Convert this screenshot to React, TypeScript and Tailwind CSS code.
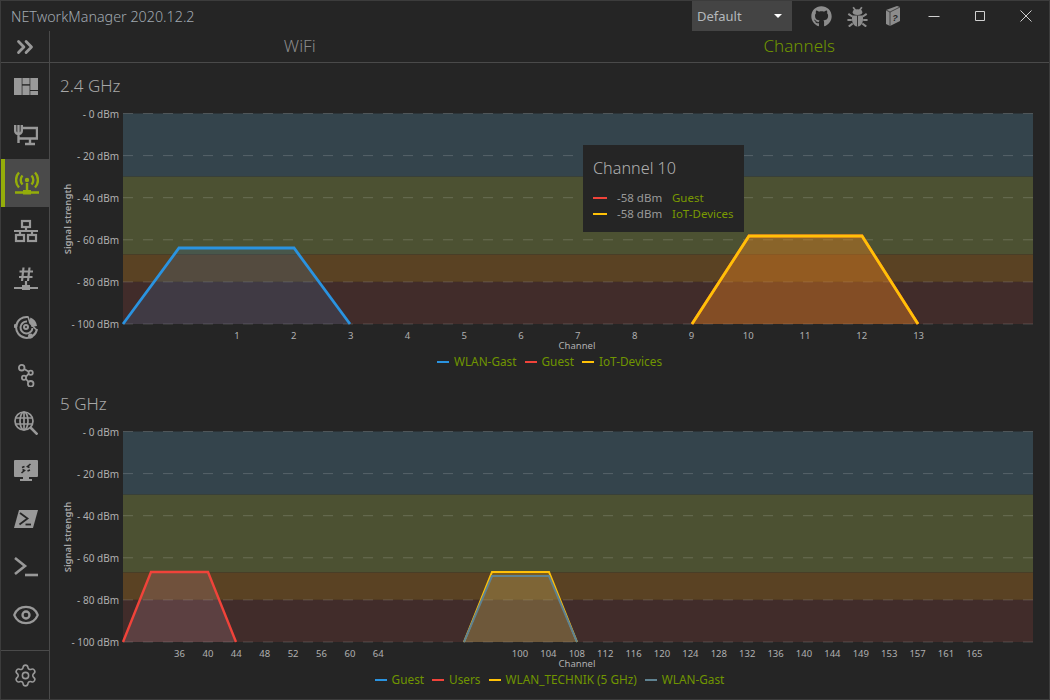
import React from 'react';
import { ChevronsRight, Settings, Eye } from 'lucide-react';
import { FaGithub } from 'react-icons/fa';

type Series = { name: string; color: string; fill: string; opacity: number; points: number[][] };
type Plot = { ticks: { label: string; x: number }[]; lineWidth: number; series: Series[]; legend: { name: string; color: string }[] };

const BLUE = '#2a93e0';
const RED = '#f0433a';
const YELLOW = '#ffc107';
const STEEL = '#5f8291';

const channels24 = ['1', '2', '3', '4', '5', '6', '7', '8', '9', '10', '11', '12', '13'].map((label, i) => ({ label, x: 187 + i * 56.8 }));
const low5 = ['36', '40', '44', '48', '52', '56', '60', '64'].map((label, i) => ({ label, x: 129.5 + i * 28.4 }));
const high5 = ['100', '104', '108', '112', '116', '120', '124', '128', '132', '136', '140', '144', '149', '153', '157', '161', '165'].map((label, i) => ({ label, x: 470 + i * 28.4 }));

const plot24: Plot = {
  ticks: channels24,
  lineWidth: 2.8,
  series: [
    { name: 'WLAN-Gast', color: BLUE, fill: '#3c73af', opacity: 0.2, points: [[73, 224], [129, 148], [244, 148], [300, 224]] },
    { name: 'Guest', color: RED, fill: '#f0433a', opacity: 0.2, points: [[642, 224], [699, 136], [812, 136], [868, 224]] },
    { name: 'IoT-Devices', color: YELLOW, fill: '#ffc107', opacity: 0.2, points: [[642, 224], [699, 136], [812, 136], [868, 224]] },
  ],
  legend: [
    { name: 'WLAN-Gast', color: BLUE },
    { name: 'Guest', color: RED },
    { name: 'IoT-Devices', color: YELLOW },
  ],
};

const plot5: Plot = {
  ticks: [...low5, ...high5],
  lineWidth: 2.4,
  series: [
    { name: 'Users', color: RED, fill: '#c8919f', opacity: 0.2, points: [[73, 224], [101, 154], [158, 154], [186, 224]] },
    { name: 'WLAN_TECHNIK (5 GHz)', color: YELLOW, fill: '#ffc107', opacity: 0.2, points: [[414, 224], [442, 154], [499, 154], [527, 224]] },
    { name: 'WLAN-Gast', color: STEEL, fill: '#8a8f9c', opacity: 0.2, points: [[414, 224], [442, 158], [499, 158], [527, 224]] },
  ],
  legend: [
    { name: 'Guest', color: BLUE },
    { name: 'Users', color: RED },
    { name: 'WLAN_TECHNIK (5 GHz)', color: YELLOW },
    { name: 'WLAN-Gast', color: STEEL },
  ],
};

const Chart = ({ plot }: { plot: Plot }) => {
  const yOf = (dbm: number) => 13.5 + dbm * 2.105;
  return (
    <svg width={999} height={252} className="block" fontFamily="'Noto Sans', sans-serif">
      <rect x={73} y={yOf(0)} width={910} height={yOf(30) - yOf(0)} fill="#34444c" />
      <rect x={73} y={yOf(30)} width={910} height={yOf(67) - yOf(30)} fill="#4c5132" />
      <rect x={73} y={yOf(67)} width={910} height={yOf(80) - yOf(67)} fill="#5a4223" />
      <rect x={73} y={yOf(80)} width={910} height={yOf(100) - yOf(80)} fill="#412c2a" />
      {[0, 20, 40, 60, 80, 100].map((d) => (
        <g key={d}>
          <line x1={73} x2={983} y1={yOf(d)} y2={yOf(d)} stroke="#ffffff" strokeOpacity={0.17} strokeDasharray="10 10" />
          <text x={69} y={yOf(d) + 4} textAnchor="end" fontSize={10} fill="#b0b0b0">- {d} dBm</text>
        </g>
      ))}
      {plot.series.map((s) => (
        <g key={s.name}>
          <polygon points={s.points.map((p) => p.join(',')).join(' ')} fill={s.fill} fillOpacity={s.opacity} />
          <polyline points={s.points.map((p) => p.join(',')).join(' ')} fill="none" stroke={s.color} strokeWidth={s.color === STEEL || plot === plot5 && s.color === YELLOW ? 2 : plot.lineWidth} />
        </g>
      ))}
      {plot.ticks.map((t) => (
        <text key={t.label} x={t.x} y={239} textAnchor="middle" fontSize={9.5} fill="#b0b0b0">{t.label}</text>
      ))}
      <text x={527} y={249} textAnchor="middle" fontSize={9.5} fill="#b0b0b0">Channel</text>
      <text transform="translate(21 119) rotate(-90)" textAnchor="middle" fontSize={9.5} fontWeight={600} fill="#a8a8a8">Signal strength</text>
    </svg>
  );
};

const Section = ({ title, plot, children }: { title: string; plot: Plot; children?: React.ReactNode }) => (
  <section className="relative h-[318px] flex flex-col">
    <h2 className="h-[37px] pl-[10px] pt-[10px] text-[17px] leading-[26px] font-light text-[#a8a8a8]">{title}</h2>
    <Chart plot={plot} />
    <div className="h-[20px] flex items-center justify-center gap-[8px] text-[11.8px] text-[#709500]">
      {plot.legend.map((l) => (
        <div key={l.name} className="flex items-center gap-[5px]">
          <span className="w-[12px] h-[2px]" style={{ backgroundColor: l.color }} />
          <span>{l.name}</span>
        </div>
      ))}
    </div>
    {children}
  </section>
);

const Tooltip = () => (
  <div className="absolute left-[533px] top-[82px] w-[161px] h-[87px] bg-[#252525] px-[10px] pt-[10px] text-[11.5px] text-[#9a9a9a]">
    <div className="text-[16.2px] leading-[26px] font-light text-[#b0b0b0] mb-[9px]">Channel 10</div>
    <div className="flex items-center h-[16px]">
      <span className="w-[14px] h-[2px] bg-[#f0433a] mr-[10px]" />
      <span className="w-[55px]">-58 dBm</span>
      <span className="text-[#7a9a01]">Guest</span>
    </div>
    <div className="flex items-center h-[16px]">
      <span className="w-[14px] h-[2px] bg-[#ffc107] mr-[10px]" />
      <span className="w-[55px]">-58 dBm</span>
      <span className="text-[#7a9a01]">IoT-Devices</span>
    </div>
  </div>
);

// sidebar icons, all on a 24 grid
const NavIcons: React.ReactNode[] = [
  <g fill="currentColor">
    <rect x="0" y="3" width="7.7" height="17" />
    <rect x="8.4" y="3" width="7.2" height="6.2" />
    <rect x="8.4" y="10.6" width="7.2" height="9.4" />
    <rect x="16.3" y="3" width="7.7" height="12" />
    <rect x="16.3" y="16" width="7.7" height="4" />
  </g>,
  <g fill="none" stroke="currentColor" strokeWidth="2.4">
    <path d="M9 5H23V15.5H5" />
    <path d="M16 15.5V20M11 21H21" />
    <path d="M1.2 2V8C1.2 10 3 11 4.5 11C6 11 7.8 10 7.8 8V2M4.5 2V20" />
  </g>,
  <g fill="none" stroke="currentColor" strokeWidth="2.4">
    <circle cx="12" cy="9" r="2.2" fill="currentColor" stroke="none" />
    <path d="M7.5 4.5A6.5 6.5 0 0 0 7.5 13.5M16.5 4.5A6.5 6.5 0 0 1 16.5 13.5" />
    <path d="M4 1.5A11 11 0 0 0 4 16.5M20 1.5A11 11 0 0 1 20 16.5" />
    <path d="M12 12V20M0 21.5H24" />
    <rect x="8" y="19" width="8" height="4.5" fill="currentColor" stroke="none" />
  </g>,
  <g fill="none" stroke="currentColor" strokeWidth="2.2">
    <rect x="8" y="2" width="8" height="6" />
    <rect x="2" y="16" width="8" height="6" />
    <rect x="14" y="16" width="8" height="6" />
    <path d="M12 8V12M0 12H24M6 12V16M18 12V16" />
  </g>,
  <g fill="none" stroke="currentColor" strokeWidth="2.2">
    <path d="M9.5 0.5L8 14M15.5 0.5L14 14M5.5 4.5H19M5 10H18.5" />
    <path d="M12 14V20M0 21H24" />
    <rect x="8" y="18" width="8" height="5" fill="currentColor" stroke="none" />
  </g>,
  <g fill="none" stroke="currentColor" strokeWidth="2">
    <path d="M14 2A10.5 10.5 0 1 0 23 14" />
    <path d="M13 6.5A6 6 0 1 0 18.5 13" />
    <circle cx="12" cy="12" r="2" />
    <path d="M14 1.5L16 8L22 14.5" strokeWidth="1.6" />
    <path d="M16.5 2.5A10.5 10.5 0 0 1 23 11L17.5 12A5.5 5.5 0 0 0 15 7Z" fill="currentColor" stroke="none" />
    <circle cx="1.5" cy="11" r="2" fill="currentColor" stroke="none" />
    <circle cx="16.5" cy="21" r="2.5" fill="currentColor" stroke="none" />
  </g>,
  <g fill="none" stroke="currentColor" strokeWidth="1.8">
    <circle cx="7.7" cy="4.7" r="2.8" />
    <circle cx="16.7" cy="9.7" r="2.1" />
    <circle cx="10" cy="14.7" r="2.1" />
    <circle cx="16.7" cy="20.8" r="2.8" />
    <path d="M10.2 6L14.9 8.7M14.8 10.7L12 13.6M11.9 16L14.5 18.9" />
  </g>,
  <g fill="none" stroke="currentColor" strokeWidth="1.7">
    <circle cx="10" cy="10" r="9" />
    <ellipse cx="10" cy="10" rx="4" ry="9" />
    <path d="M1.5 7H18.5M1.5 13H18.5M10 1V19" />
    <path d="M16.5 16.5L23.5 23.5" strokeWidth="2.6" />
  </g>,
  <g>
    <path fill="currentColor" d="M1 1H23Q24 1 24 2V17Q24 18 23 18H15V20H18V22H6V20H9V18H1Q0 18 0 17V2Q0 1 1 1Z" />
    <rect x="2" y="3" width="20" height="13" fill="currentColor" />
    <path d="M7.5 14L10.5 11.5L8.5 10.5M16.5 5L13.5 7.5L15.5 8.5M8 8.5L10.5 7.5M13.5 12L16 11" fill="none" stroke="#252525" strokeWidth="1.6" />
  </g>,
  <g>
    <path d="M5 3H24L19 21H0Z" fill="currentColor" />
    <path d="M6 6L13.5 11.5L5.5 17.5" fill="none" stroke="#252525" strokeWidth="1.8" />
    <path d="M11.5 17.5H17" fill="none" stroke="#252525" strokeWidth="1.8" />
  </g>,
  <g fill="none" stroke="currentColor" strokeWidth="2.6">
    <path d="M1 3L11 11L1 19" />
    <path d="M11 20H24" />
  </g>,
];

const Bug = () => (
  <svg width="21" height="21" viewBox="0 0 24 24" fill="currentColor">
    <path d="M7 1.5L10 5.5M17 1.5L14 5.5" stroke="currentColor" strokeWidth="2" fill="none" />
    <ellipse cx="12" cy="7" rx="5.5" ry="3.2" />
    <path d="M6 10.8H18C19 16 18 23 12 23.5C6 23 5 16 6 10.8Z" />
    <path d="M6 12L1.5 9M5.5 16H0.5M6.5 20L2 23.5M18 12L22.5 9M18.5 16H23.5M17.5 20L22 23.5" stroke="currentColor" strokeWidth="2.4" fill="none" />
    <path d="M12 11V23.5" stroke="#252525" strokeWidth="1" fill="none" />
  </svg>
);

const Book = () => (
  <svg width="14" height="20" viewBox="0 0 14 20">
    <path d="M0 4L11 0L14 1V15L4 20L0 18Z" fill="currentColor" />
    <path d="M0 4L4 6L14 1M4 6V20" fill="none" stroke="#252525" strokeWidth="0.7" />
    <text x="9" y="14.5" textAnchor="middle" fontSize="9" fontWeight="700" fontStyle="italic" fill="#252525" fontFamily="'Liberation Sans', sans-serif">?</text>
  </svg>
);

const WinIcon = ({ d }: { d: string }) => (
  <svg width="12" height="12" viewBox="0 0 12 12" fill="none" stroke="#d0d0d0" strokeWidth="1">
    <path d={d} />
  </svg>
);

const TitleBar = () => (
  <div className="h-[30px] flex items-center text-[#8c8c8c]">
    <div className="pl-[10px] pt-[2px] text-[14.3px] font-light text-[#a0a8b0]">NETworkManager 2020.12.2</div>
    <div className="ml-auto w-[100px] h-[30px] bg-[#444444] flex items-center justify-between pl-[5px] pr-[10px] pt-[2px] text-[13px] text-[#b4b8bc]">
      <span>Default</span>
      <span className="w-0 h-0 border-x-[4px] border-x-transparent border-t-[4px] border-t-white -mt-[3px]" />
    </div>
    <div className="ml-[11px] w-[36px] flex justify-center"><FaGithub size={21} /></div>
    <div className="w-[36px] flex justify-center"><Bug /></div>
    <div className="w-[36px] flex justify-center"><Book /></div>
    <div className="w-[46px] flex justify-center"><WinIcon d="M0.5 6.5H11.5" /></div>
    <div className="w-[46px] flex justify-center"><WinIcon d="M1.5 1.5H10.5V10.5H1.5Z" /></div>
    <div className="w-[46px] flex justify-center"><WinIcon d="M0.5 0.5L11.5 11.5M11.5 0.5L0.5 11.5" /></div>
  </div>
);

const Sidebar = () => (
  <aside className="w-[49px] border-r border-[#4a4a4a] flex flex-col text-[#999999]">
    <div className="h-[32px] shrink-0 border-b border-[#4a4a4a] flex items-center justify-center">
      <ChevronsRight size={26} strokeWidth={2.6} />
    </div>
    {NavIcons.map((icon, i) => (
      <div key={i} className={`h-[48px] shrink-0 flex items-center justify-center ${i === 2 ? 'bg-[#4a4a4a] border-l-4 border-[#94ad0a] text-[#94ad0a]' : 'pl-[2px]'}`}>
        <svg width="24" height="24" viewBox="0 0 24 24">{icon}</svg>
      </div>
    ))}
    <div className="h-[48px] shrink-0 flex items-center justify-center pl-[2px]">
      <Eye size={28} strokeWidth={2} />
    </div>
    <div className="mt-auto h-[49px] border-t border-[#4a4a4a] flex items-center justify-center">
      <Settings size={25} strokeWidth={1.5} />
    </div>
  </aside>
);

const App: React.FC = () => (
  <div className="w-[1050px] h-[700px] overflow-hidden bg-[#252525] border border-[#3c3c3c] flex flex-col font-['Noto_Sans',sans-serif]">
    <TitleBar />
    <div className="flex-1 flex min-h-0">
      <Sidebar />
      <main className="flex-1 min-w-0">
        <div className="h-[32px] border-b border-[#4a4a4a] grid grid-cols-2 text-center text-[17px] leading-[30px] font-light">
          <div className="text-[#8a8a8a]">WiFi</div>
          <div className="text-[#709500]">Channels</div>
        </div>
        <Section title="2.4 GHz" plot={plot24}><Tooltip /></Section>
        <Section title="5 GHz" plot={plot5} />
      </main>
    </div>
  </div>
);

export default App;
